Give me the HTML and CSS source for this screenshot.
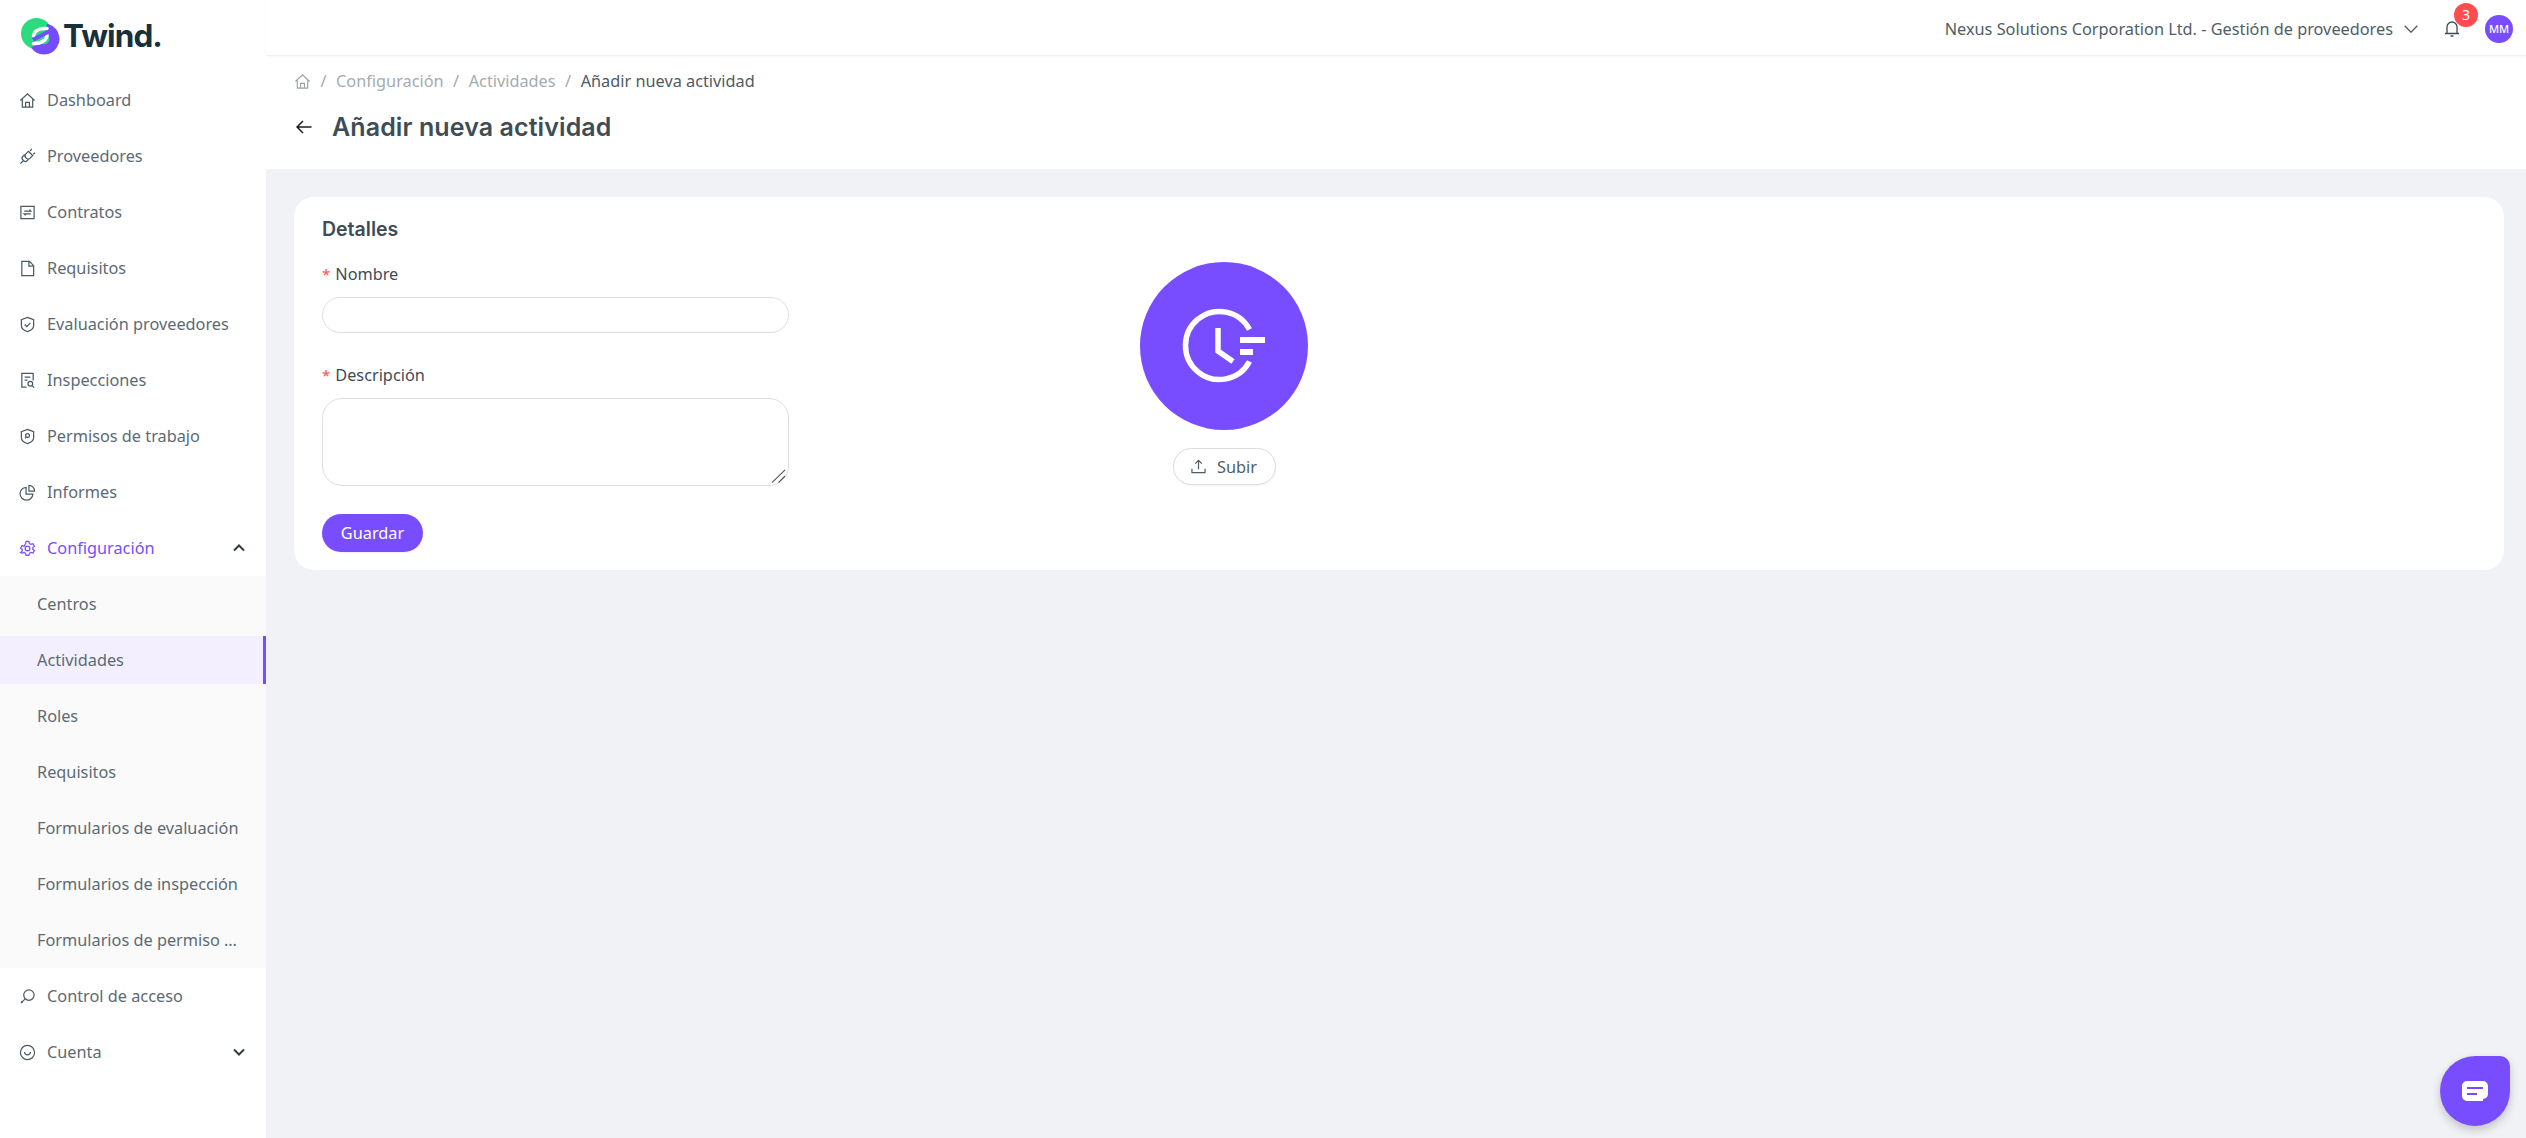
FILE: index.html
```html
<!DOCTYPE html>
<html lang="es">
<head>
<meta charset="utf-8">
<title>Añadir nueva actividad</title>
<link rel="stylesheet" href="styles.css">
</head>
<body>
<div class="app">
  <aside class="sidebar">
    <div class="logo">
      <svg class="logo-mark" viewBox="0 0 40 38" width="40" height="38">
        <circle cx="15.5" cy="15.5" r="15.5" fill="#2bdc7f"/>
        <path d="M14.300 27A10.500 10.500 0 1 0 25 10.700" fill="none" stroke="#754cff" stroke-width="10"/>
        <path d="M12.500 18C13 13 18 10 26 10.500" fill="none" stroke="#fff" stroke-width="3.500" stroke-linecap="round"/>
        <path d="M26 17C26 22 20 26 12.500 25.500" fill="none" stroke="#fff" stroke-width="3.500" stroke-linecap="round"/>
        <path d="M12 21.700 27 14" fill="none" stroke="#754cff" stroke-width="4"/>
      </svg>
      <span class="logo-text">Twind.</span>
    </div>
    <nav class="nav">
      <a class="item"><svg class="ico" viewBox="0 0 18 18"><path d="M1.500 9 9 2l7.500 7M3.500 7.500V16h11V7.500M7 16v-5h4v5"/></svg>Dashboard</a>
      <a class="item"><svg class="ico" viewBox="0 0 18 18"><path d="m1.500 16.500 3-3M13.500 1 12 3M17 5l-2 1.500M10 3.500l4.500 4.500-3 3c-1 1-2.500 1-3.500 0l-1-1c-1-1-1-2.500 0-3.500zM7 9 5.500 7.500 4 9c-1 1-1 2.500 0 3.500l1 1c1 1 2.500 1 3.500 0L10 12"/></svg>Proveedores</a>
      <a class="item"><svg class="ico" viewBox="0 0 18 18"><path d="M2 2.500h14v13H2zM5.500 7.500h7l-1.500-1.500M12.500 10.500h-7L7 12"/></svg>Contratos</a>
      <a class="item"><svg class="ico" viewBox="0 0 18 18"><path d="M3 1.500h8l4.500 4.500v10.500H3zM10.500 1.500v5h5"/></svg>Requisitos</a>
      <a class="item"><svg class="ico" viewBox="0 0 18 18"><path d="M9 1.500 15.500 4v6c0 3-3 5.500-6.500 6.500C5.500 15.500 2.500 13 2.500 10V4zM6 9l2.200 2.200L12 7.200"/></svg>Evaluación proveedores</a>
      <a class="item"><svg class="ico" viewBox="0 0 18 18"><path d="M8 16H3V1.500h12V9M6 5.500h6M6 8.500h3"/><circle cx="12" cy="12.500" r="2.500"/><path d="m14 14.500 2 2"/></svg>Inspecciones</a>
      <a class="item"><svg class="ico" viewBox="0 0 18 18"><path d="M9 1.500 15.500 4v6c0 3-3 5.500-6.500 6.500C5.500 15.500 2.500 13 2.500 10V4z"/><circle cx="9" cy="8" r="2"/><path d="M7.500 9.500 6.500 11"/></svg>Permisos de trabajo</a>
      <a class="item"><svg class="ico" viewBox="0 0 18 18"><path d="M7.500 3.500a6.800 6.800 0 1 0 7.200 7.200H7.500z"/><path d="M10.500 1.500a6 6 0 0 1 6 6h-6z"/></svg>Informes</a>
      <a class="item active"><svg class="ico" viewBox="0 0 18 18"><circle cx="9" cy="9" r="2.500"/><path d="M7.500 1.500h3l.5 2.200 1.600.9 2.200-.7 1.500 2.600-1.700 1.500v1.800l1.700 1.500-1.500 2.600-2.200-.7-1.600.9-.5 2.200h-3l-.5-2.200-1.600-.9-2.200.7L1.700 13.300l1.700-1.500V10L1.700 8.500l1.500-2.600 2.200.7L7 3.700z"/></svg>Configuración<svg class="chev" viewBox="0 0 12 8"><path d="M1 6.500 6 1.500l5 5"/></svg></a>
      <div class="submenu">
        <a class="sub">Centros</a>
        <a class="sub current">Actividades</a>
        <a class="sub">Roles</a>
        <a class="sub">Requisitos</a>
        <a class="sub">Formularios de evaluación</a>
        <a class="sub">Formularios de inspección</a>
        <a class="sub">Formularios de permiso …</a>
      </div>
      <a class="item"><svg class="ico" viewBox="0 0 18 18"><circle cx="10.500" cy="7.500" r="5.500"/><path d="M6.500 11.500 2 16M2.500 14l1.500 1.500"/></svg>Control de acceso</a>
      <a class="item"><svg class="ico" viewBox="0 0 18 18"><circle cx="9" cy="9" r="7.500"/><path d="M5.800 8.500c.5 4 5.900 4 6.400 0"/></svg>Cuenta<svg class="chev" viewBox="0 0 12 8"><path d="m1 1.500 5 5 5-5"/></svg></a>
    </nav>
  </aside>
  <div class="main">
    <header class="topbar">
      <span class="company">Nexus Solutions Corporation Ltd. - Gestión de proveedores</span>
      <svg class="top-chev" viewBox="0 0 14 8"><path d="m.7.700 6.300 6.500L13.300.700"/></svg>
      <span class="bell">
        <svg class="bell-ico" viewBox="0 0 16 18"><path d="M3 13.500V7a5 5 0 0 1 10 0v6.500M1 13.500h14M6.500 16h3"/></svg>
        <span class="badge">3</span>
      </span>
      <span class="avatar">MM</span>
    </header>
    <section class="pagehead">
      <div class="crumbs">
        <svg class="crumb-home" viewBox="0 0 18 18"><path d="M1.500 9 9 2l7.500 7M3.500 7.500V16h11V7.500M7 16v-5h4v5"/></svg>
        <span class="sep">/</span><span>Configuración</span>
        <span class="sep">/</span><span>Actividades</span>
        <span class="sep">/</span><span class="crumb-now">Añadir nueva actividad</span>
      </div>
      <div class="titlerow">
        <svg class="back" viewBox="0 0 16 14"><path d="M15.500 7H1M7 1 1 7l6 6"/></svg>
        <h1>Añadir nueva actividad</h1>
      </div>
    </section>
    <section class="content">
      <div class="card">
        <h2>Detalles</h2>
        <div class="cols">
          <form class="form">
            <label class="label" for="n"><span class="req">*</span>Nombre</label>
            <input class="input" id="n" type="text">
            <label class="label second" for="d"><span class="req">*</span>Descripción</label>
            <div class="area">
              <textarea class="textarea" id="d"></textarea>
              <svg class="grip" viewBox="0 0 16 15"><path d="M1 14.500 15 1M8 14.500 15 7.500"/></svg>
            </div>
            <button class="save" type="button">Guardar</button>
          </form>
          <div class="avatar-col">
            <div class="big">
              <svg viewBox="0 0 84 76" width="84" height="76"><path d="M67.500 21.500A34 34 0 1 0 67.500 53.500M36 20v23l15 10.500" fill="none" stroke="#fff" stroke-width="5.500"/><path d="M58 32h25M58 44h13" fill="none" stroke="#fff" stroke-width="6"/></svg>
            </div>
            <button class="upload" type="button"><svg class="up-ico" viewBox="0 0 16 16"><path d="M8 11V2M4.500 5 8 1.500 11.500 5M1 10.500V14.500h14v-4"/></svg>Subir</button>
          </div>
        </div>
      </div>
    </section>
  </div>
</div>
<button class="chat" type="button" aria-label="Chat"><svg viewBox="0 0 26 20" width="26" height="20"><path d="M5 0h16a5 5 0 0 1 5 5v8a5 5 0 0 1-5 5v2H5a5 5 0 0 1-5-5V5a5 5 0 0 1 5-5z" fill="#fff"/><path d="M5 7h16M5 13h10" stroke="#754cff" stroke-width="2"/></svg></button>
</body>
</html>
```
FILE: styles.css
```css
* { box-sizing: border-box; }
html, body { margin: 0; height: 100%; }
body {
  font-family: "Noto Sans", "Open Sans", sans-serif;
  font-size: 16.300px;
  color: #3f4c55;
  background: #f0f2f6;
  overflow: hidden;
}
.app { display: flex; height: 100vh; overflow: hidden; }
.sidebar {
  width: 266px;
  flex: none;
  background: #fff;
}
.logo {
  height: 72px;
  padding: 18px 0 0 21px;
  display: flex;
  align-items: flex-start;
  gap: 2px;
}
.logo-mark { flex: none; }
.logo-text {
  font-family: Inter, sans-serif;
  font-weight: 700;
  font-size: 31.500px;
  line-height: 36px;
  letter-spacing: -.9px;
  color: #17303a;
}
.nav { display: flex; flex-direction: column; }
.item {
  height: 56px;
  display: flex;
  align-items: center;
  padding: 0 21px 0 19px;
  color: #5c6a73;
  white-space: nowrap;
}
.ico {
  width: 17px;
  height: 17px;
  margin-right: 11px;
  flex: none;
  fill: none;
  stroke: #4a5a64;
  stroke-width: 1.300;
}
.active { color: #774dff; }
.active .ico { stroke: #774dff; }
.chev {
  width: 12px;
  height: 8px;
  margin-left: auto;
  fill: none;
  stroke: #2f3d46;
  stroke-width: 2;
}
.submenu {
  background: #fafafa;
  display: flex;
  flex-direction: column;
}
.sub {
  height: 48px;
  margin: 4px 0;
  padding: 0 14px 0 37px;
  display: flex;
  align-items: center;
  color: #5c6a73;
  white-space: nowrap;
}
.current {
  background: #f4effe;
  border-right: 3px solid #774dff;
}
.main { flex: 1; min-width: 0; display: flex; flex-direction: column; }
.topbar {
  height: 56px;
  background: #fff;
  border-bottom: 1px solid #f0f0f0;
  display: flex;
  align-items: center;
  justify-content: flex-end;
  padding: 2px 13px 0 0;
  box-shadow: 0 1px 3px rgba(0, 0, 0, .03);
  position: relative;
}
.company { color: #4f5d66; }
.top-chev {
  width: 14px;
  height: 8px;
  margin: 0 26px 0 11px;
  fill: none;
  stroke: #4f5d66;
  stroke-width: 1.300;
}
.bell { position: relative; display: block; width: 16px; height: 18px; margin-right: 25px; }
.bell-ico { display: block; width: 16px; height: 18px; fill: none; stroke: #3f4c55; stroke-width: 1.300; }
.badge {
  position: absolute;
  left: 10px;
  top: -17px;
  width: 24px;
  height: 24px;
  border-radius: 50%;
  background: #ff4d4f;
  color: #fff;
  font-size: 14px;
  line-height: 24px;
  text-align: center;
}
.avatar {
  width: 28px;
  height: 28px;
  border-radius: 50%;
  background: #774dff;
  color: #fff;
  font-size: 11px;
  font-weight: 500;
  line-height: 28px;
  text-align: center;
}
.pagehead {
  height: 113px;
  background: #fff;
  padding: 13px 28px 0;
}
.crumbs {
  height: 24px;
  display: flex;
  align-items: center;
  color: #a4abb0;
  white-space: nowrap;
}
.crumb-home { width: 17px; height: 17px; fill: none; stroke: #9aa2a8; stroke-width: 1.200; }
.sep { margin: 0 9.500px; }
.crumb-now { color: #4f5a62; }
.titlerow {
  display: flex;
  align-items: center;
  height: 36px;
  margin-top: 16px;
}
.back { width: 16px; height: 14px; margin: 0 20px 0 2px; fill: none; stroke: #1c1c1c; stroke-width: 1.500; flex: none; }
h1 {
  margin: 0;
  font-family: Inter, sans-serif;
  font-size: 25px;
  font-weight: 600;
  letter-spacing: .1px;
  color: #3f4c55;
}
.content { flex: 1; padding: 28px 22px 0 28px; }
.card {
  background: #fff;
  border-radius: 20px;
  height: 373px;
  padding: 18px 28px 0;
}
h2 {
  margin: 0;
  font-family: Inter, sans-serif;
  font-size: 19.500px;
  line-height: 28px;
  font-weight: 600;
  color: #3f4c55;
}
.cols { display: flex; }
.form { width: 467px; flex: none; display: flex; flex-direction: column; align-items: flex-start; padding-top: 19px; }
.label { line-height: 24px; color: #3f4c55; }
.second { margin-top: 30px; }
.req { color: #ff4d4f; margin-right: 5px; font-size: 15px; }
.input, .textarea {
  width: 467px;
  margin: 0;
  background: #fff;
  border: 1px solid #dfdfdf;
  outline: none;
}
.input { height: 36px; border-radius: 18px; margin-top: 11px; }
.area { position: relative; margin-top: 11px; height: 88px; }
.textarea { height: 88px; border-radius: 20px; display: block; resize: none; }
.grip {
  position: absolute;
  right: 3px;
  bottom: 3px;
  width: 15px;
  height: 14px;
  fill: none;
  stroke: #555;
  stroke-width: 1.200;
}
.save {
  margin-top: 28px;
  width: 101px;
  height: 38px;
  border: 0;
  border-radius: 19px;
  background: #774dff;
  color: #fff;
  font: inherit;
  box-shadow: 0 1px 2px rgba(0, 0, 0, .06);
}
.avatar-col {
  margin-left: 351px;
  padding-top: 19px;
  display: flex;
  flex-direction: column;
  align-items: center;
  width: 168px;
}
.big {
  width: 168px;
  height: 168px;
  border-radius: 50%;
  background: #774dff;
  display: flex;
  align-items: center;
  justify-content: center;
}
.upload {
  margin-top: 18px;
  width: 103px;
  height: 37px;
  background: #fff;
  border: 1px solid #dcdcdc;
  border-radius: 19px;
  font: inherit;
  color: #4f5d66;
  display: flex;
  align-items: center;
  justify-content: center;
  gap: 11px;
  box-shadow: 0 1px 2px rgba(0, 0, 0, .05);
}
.up-ico { width: 15px; height: 15px; fill: none; stroke: #4f5d66; stroke-width: 1.300; }
.chat {
  position: fixed;
  left: 2440px;
  top: 1056px;
  width: 70px;
  height: 70px;
  padding: 0;
  border: 0;
  background: #774dff;
  border-radius: 50% 10px 50% 50%;
  box-shadow: 0 4px 10px rgba(0, 0, 0, .2);
  display: flex;
  align-items: center;
  justify-content: center;
}
```
